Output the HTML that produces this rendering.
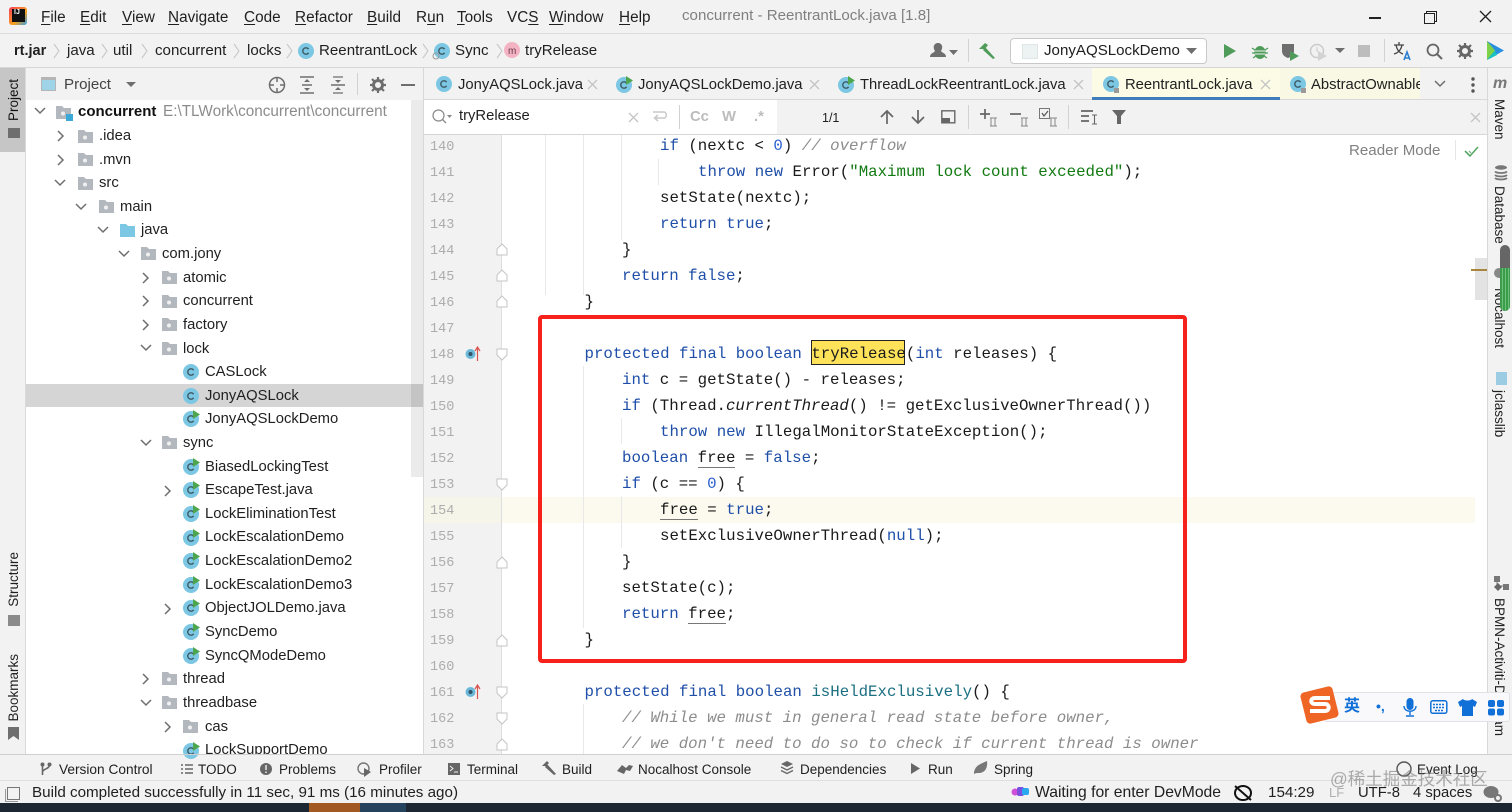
<!DOCTYPE html>
<html><head><meta charset="utf-8"><style>
html,body{margin:0;padding:0}
body{width:1512px;height:812px;position:relative;overflow:hidden;background:#f2f2f2;font-family:"Liberation Sans","Noto Sans CJK SC",sans-serif;font-size:14.8px;color:#1f1f1f}
.b{position:absolute}
.t{position:absolute;white-space:pre;line-height:20px;height:20px;transform:translateY(-10px)}
.mn{font-size:15.3px}
.f15{font-size:15.1px}
.c{position:absolute;white-space:pre;font-family:"Liberation Mono",monospace;font-size:15.75px;line-height:20px;transform:translateY(-10px);color:#1a1a1a}
.n{position:absolute;left:430px;font-family:"Liberation Mono",monospace;font-size:13.5px;line-height:20px;transform:translateY(-8px);color:#adadad}
.k{color:#1f4fa8}.m{color:#1a6f80}.g{color:#8c8c8c;font-style:italic}.s{color:#127a12}.i{font-style:italic}.u{border-bottom:1px solid #777}.d{color:#2a5fd0}
.v{position:absolute;white-space:pre;writing-mode:vertical-rl;font-size:13.5px;line-height:16px}
.l{transform:rotate(180deg)}
svg{position:absolute;overflow:visible}
u{text-decoration-thickness:1px;text-underline-offset:2px}
</style></head><body>
<svg width="0" height="0" style="position:absolute"><defs>
<g id="ci"><circle cx="8" cy="8" r="8" fill="#7cc7e3"/><path d="M10.6 6.2A3.2 3.2 0 1 0 10.6 9.8" fill="none" stroke="#3d5a66" stroke-width="1.4"/></g>
<g id="cr"><circle cx="8" cy="8" r="8" fill="#7cc7e3"/><path d="M10.6 6.2A3.2 3.2 0 1 0 10.6 9.8" fill="none" stroke="#3d5a66" stroke-width="1.4"/><path d="M10-1L17 3.5 10 8z" fill="#4da64d"/></g>
<g id="fo"><path d="M0 1h6l2 2h7v11H0z" fill="#b3b8bf"/><circle cx="7" cy="8.5" r="2" fill="#f0f0f0"/></g>
<path id="dn" d="M0 0L5 5 10 0" fill="none" stroke="#6e6e6e" stroke-width="1.5"/>
<path id="rt" d="M0 0L5 5 0 10" fill="none" stroke="#6e6e6e" stroke-width="1.5"/>
<path id="x" d="M0 0L9 9M9 0L0 9" stroke="#c4c4c4" stroke-width="1.3" fill="none"/>
<path id="fd" d="M0 0H10V6L5 11 0 6Z" fill="#fff" stroke="#c4c4c4"/>
<path id="fu" d="M0 11H10V5L5 0 0 5Z" fill="#fff" stroke="#c4c4c4"/>
</defs></svg>

<!-- title bar -->
<div class="b" style="left:9px;top:7px;width:18px;height:18px;background:linear-gradient(135deg,#fc3a5c,#f7a21c 60%,#2d9ee8);border-radius:3px"></div>
<div class="b" style="left:12px;top:9px;width:13px;height:13px;background:#111"></div>
<div class="t" style="left:14px;top:13px;color:#fff;font-size:7px;font-weight:bold">IJ</div>
<div class="t mn" style="left:41px;top:18px"><u>F</u>ile</div>
<div class="t mn" style="left:80px;top:18px"><u>E</u>dit</div>
<div class="t mn" style="left:122px;top:18px"><u>V</u>iew</div>
<div class="t mn" style="left:168px;top:18px"><u>N</u>avigate</div>
<div class="t mn" style="left:244px;top:18px"><u>C</u>ode</div>
<div class="t mn" style="left:295px;top:18px"><u>R</u>efactor</div>
<div class="t mn" style="left:367px;top:18px"><u>B</u>uild</div>
<div class="t mn" style="left:416px;top:18px">R<u>u</u>n</div>
<div class="t mn" style="left:457px;top:18px"><u>T</u>ools</div>
<div class="t mn" style="left:507px;top:18px">VC<u>S</u></div>
<div class="t mn" style="left:549px;top:18px"><u>W</u>indow</div>
<div class="t mn" style="left:619px;top:18px"><u>H</u>elp</div>
<div class="t f15" style="left:682px;top:16px;color:#808080">concurrent - ReentrantLock.java [1.8]</div>
<div class="b" style="left:1369px;top:17px;width:12px;height:1.5px;background:#222"></div>
<div class="b" style="left:1424px;top:13px;width:9px;height:9px;border:1.3px solid #222;background:#f2f2f2;box-shadow:2px -2px 0 -1px #f2f2f2,2px -2px 0 0 #222"></div>
<svg style="left:1480px;top:11px" width="12" height="12"><path d="M0 0L11 11M11 0L0 11" stroke="#222" stroke-width="1.3"/></svg>
<div class="b" style="left:0;top:33px;width:1512px;height:1px;background:#dcdcdc"></div>

<!-- breadcrumb -->
<div class="t" style="left:14px;top:51px;font-weight:bold;font-size:14.5px">rt.jar</div>
<div class="t f15" style="left:67px;top:51px">java</div>
<div class="t f15" style="left:113px;top:51px">util</div>
<div class="t f15" style="left:155px;top:51px">concurrent</div>
<div class="t f15" style="left:247px;top:51px">locks</div>
<svg style="left:298px;top:43px" width="16" height="16"><use href="#ci"/></svg>
<div class="t f15" style="left:319px;top:51px">ReentrantLock</div>
<svg style="left:434px;top:43px" width="16" height="16"><use href="#ci"/><circle cx="2" cy="13" r="3" fill="none" stroke="#999"/></svg>
<div class="t f15" style="left:455px;top:51px">Sync</div>
<svg style="left:504px;top:42px" width="16" height="16"><circle cx="8" cy="8" r="8" fill="#f4b3c2"/><text x="4" y="12" font-size="10" fill="#6b3a46" font-family="Liberation Sans">m</text></svg>
<div class="t f15" style="left:525px;top:51px">tryRelease</div>
<svg style="left:50px;top:43px" width="500" height="16"><g fill="none" stroke="#c8c8c8" stroke-width="1.1"><path d="M4 1l5 7-5 7M52 1l5 7-5 7M92 1l5 7-5 7M184 1l5 7-5 7M237 1l5 7-5 7M373 1l5 7-5 7M447 1l5 7-5 7"/></g></svg>
<svg style="left:928px;top:42px" width="32" height="18"><path d="M2 15c0-4 4-4 5-6-3-5 0-8 3-8s6 3 3 8c1 2 5 2 5 6z" fill="#6e6e6e"/><path d="M21 8h9l-4.500 5z" fill="#6e6e6e"/></svg>
<div class="b" style="left:968px;top:39px;width:1px;height:23px;background:#d2d2d2"></div>
<svg style="left:978px;top:42px" width="20" height="18"><path d="M1 7L7 1l3 2-3 4zM7 5l10 11-2 1L5 8z" fill="#4f9c5a"/></svg>
<div class="b" style="left:1010px;top:38px;width:195px;height:24px;background:#fff;border:1px solid #c9c9c9;border-radius:4px"></div>
<div class="b" style="left:1022px;top:44px;width:14px;height:13px;background:#edf3f3;border:1px solid #dfe6e6"></div>
<div class="t f15" style="left:1044px;top:51px">JonyAQSLockDemo</div>
<svg style="left:1186px;top:48px" width="12" height="8"><path d="M0 0H11L5.500 6z" fill="#6e6e6e"/></svg>
<svg style="left:1224px;top:44px" width="13" height="15"><path d="M0 0L12 7 0 14z" fill="#4f9c5a"/></svg>
<svg style="left:1252px;top:43px" width="16" height="17"><ellipse cx="8" cy="9.500" rx="5.500" ry="6.500" fill="#4f9c5a"/><path d="M0 5l3 2M16 5l-3 2M0 10h3M16 10h-3M1 15l3-2M15 15l-3-2" stroke="#4f9c5a" stroke-width="1.300"/><path d="M3 8h10M3 11h10" stroke="#f2f2f2"/></svg>
<svg style="left:1281px;top:43px" width="20" height="18"><path d="M1 1h12v7c0 4-3 6-6 7-3-1-6-3-6-7z" fill="#6e6e6e"/><path d="M9 8l9 5-9 5z" fill="#4f9c5a"/></svg>
<svg style="left:1309px;top:43px" width="20" height="18" opacity=".55"><circle cx="8" cy="8" r="6.500" fill="none" stroke="#aaa" stroke-width="1.500"/><path d="M8 4v4l3 2" stroke="#aaa" fill="none"/><path d="M9 8l9 5-9 5z" fill="#bbb"/></svg>
<svg style="left:1335px;top:48px" width="12" height="8"><path d="M0 0H10L5 5z" fill="#6e6e6e"/></svg>
<div class="b" style="left:1358px;top:45px;width:12px;height:12px;background:#bdbdbd"></div>
<div class="b" style="left:1384px;top:39px;width:1px;height:23px;background:#d2d2d2"></div>
<svg style="left:1393px;top:42px" width="20" height="19"><path d="M1 3h10M6 0v3M3 3c1 5 4 8 7 9M9 3c-1 5-4 8-8 9" stroke="#444" fill="none" stroke-width="1.300"/><path d="M11 18l3-8 3 8M12 16h4" stroke="#2a7fd0" fill="none" stroke-width="1.600"/></svg>
<svg style="left:1426px;top:43px" width="17" height="17"><circle cx="7" cy="7" r="5.500" fill="none" stroke="#666" stroke-width="1.800"/><path d="M11 11l5 5" stroke="#666" stroke-width="2"/></svg>
<svg style="left:1457px;top:43px" width="16" height="16"><circle cx="8" cy="8" r="4.500" fill="none" stroke="#666" stroke-width="3"/><path d="M8 0v3M8 13v3M0 8h3M13 8h3M2 2l2 2M12 12l2 2M14 2l-2 2M2 14l2-2" stroke="#666" stroke-width="2.200"/></svg>
<svg style="left:1487px;top:41px" width="18" height="19"><path d="M0 0L17 9.500 0 19z" fill="#2b8fe0"/><path d="M0 0L8 9.500 0 19z" fill="#7fd14a"/><path d="M8 9.500L0 19l10-5z" fill="#19c2c2"/></svg>
<div class="b" style="left:0;top:67px;width:1512px;height:1px;background:#d6d6d6"></div>

<!-- left strip -->
<div class="b" style="left:0;top:68px;width:25px;height:84px;background:#c6c6c6"></div>
<div class="b" style="left:25px;top:68px;width:1px;height:687px;background:#dadada"></div>
<div class="v l" style="left:6px;top:79px;color:#111">Project</div>
<div class="b" style="left:8px;top:128px;width:12px;height:10px;background:#6e6e6e"></div>
<div class="v l" style="left:6px;top:552px">Structure</div>
<div class="b" style="left:8px;top:615px;width:12px;height:11px;background:#8a8a8a"></div>
<div class="v l" style="left:6px;top:654px">Bookmarks</div>
<svg style="left:8px;top:727px" width="12" height="14"><path d="M0 0H11V13L5.500 9 0 13z" fill="#6e6e6e"/></svg>

<!-- project panel header -->
<div class="b" style="left:41px;top:77px;width:15px;height:14px;background:#9fd4e8;border:1px solid #b5b5b5;border-top:3px solid #b5b5b5;box-sizing:border-box"></div>
<div class="t f15" style="left:64px;top:85px;color:#444">Project</div>
<svg style="left:126px;top:82px" width="12" height="8"><path d="M0 0H10L5 5z" fill="#6e6e6e"/></svg>
<svg style="left:268px;top:76px" width="18" height="18"><circle cx="9" cy="9" r="7.500" fill="none" stroke="#6e6e6e" stroke-width="1.500"/><path d="M9 1v5M9 12v5M1 9h5M12 9h5" stroke="#6e6e6e" stroke-width="1.500"/></svg>
<svg style="left:300px;top:76px" width="15" height="18"><path d="M0 1h14M0 17h14M2 9h10" stroke="#6e6e6e" stroke-width="1.500"/><path d="M7 3l3 3H4zM7 15l3-3H4z" fill="#6e6e6e"/></svg>
<svg style="left:331px;top:76px" width="15" height="18"><path d="M0 9h14" stroke="#6e6e6e" stroke-width="1.500"/><path d="M7 7l3-3H4zM7 11l3 3H4z" fill="#6e6e6e"/><path d="M2 1h10M2 17h10" stroke="#6e6e6e" stroke-width="1.200"/></svg>
<div class="b" style="left:357px;top:73px;width:1px;height:22px;background:#d2d2d2"></div>
<svg style="left:370px;top:77px" width="16" height="16"><circle cx="8" cy="8" r="4.500" fill="none" stroke="#6e6e6e" stroke-width="3"/><path d="M8 0v3M8 13v3M0 8h3M13 8h3M2 2l2 2M12 12l2 2M14 2l-2 2M2 14l2-2" stroke="#6e6e6e" stroke-width="2.200"/></svg>
<div class="b" style="left:401px;top:84px;width:14px;height:2px;background:#6e6e6e"></div>

<!-- tree -->
<div class="b" style="left:26px;top:100px;width:397px;height:655px;background:#fff"></div>
<div class="b" style="left:411px;top:100px;width:12px;height:377px;background:#ebebeb"></div>
<div class="b" style="left:26px;top:384px;width:397px;height:23px;background:#d5d5d5"></div>
<div class="b" style="left:411px;top:384px;width:12px;height:23px;background:#c4c4c4"></div>

<svg style="left:35px;top:108px" width="10" height="6"><use href="#dn"/></svg>
<svg style="left:56px;top:105px" width="16" height="15"><use href="#fo"/><rect x="10" y="9" width="7" height="7" fill="#3ba9d8"/></svg>
<div class="t" style="left:78px;top:112px;font-weight:bold;font-size:15px;color:#111">concurrent</div>
<div class="t" style="left:163px;top:112px;color:#8c8c8c;font-size:15.3px">E:\TLWork\concurrent\concurrent</div>

<svg style="left:58px;top:131px" width="6" height="10"><use href="#rt"/></svg><svg style="left:78px;top:129px" width="15" height="15"><use href="#fo"/></svg><div class="t" style="left:99px;top:136px">.idea</div>
<svg style="left:58px;top:155px" width="6" height="10"><use href="#rt"/></svg><svg style="left:78px;top:152px" width="15" height="15"><use href="#fo"/></svg><div class="t" style="left:99px;top:160px">.mvn</div>
<svg style="left:55px;top:180px" width="10" height="6"><use href="#dn"/></svg><svg style="left:78px;top:176px" width="15" height="15"><use href="#fo"/></svg><div class="t" style="left:99px;top:183px">src</div>
<svg style="left:76px;top:204px" width="10" height="6"><use href="#dn"/></svg><svg style="left:99px;top:199px" width="15" height="15"><use href="#fo"/></svg><div class="t" style="left:120px;top:207px">main</div>
<svg style="left:98px;top:227px" width="10" height="6"><use href="#dn"/></svg><svg style="left:120px;top:223px" width="15" height="15"><path d="M0 1h6l2 2h7v11H0z" fill="#7cc7e3"/></svg><div class="t" style="left:141px;top:230px">java</div>
<svg style="left:119px;top:251px" width="10" height="6"><use href="#dn"/></svg><svg style="left:141px;top:246px" width="15" height="15"><use href="#fo"/></svg><div class="t" style="left:162px;top:254px">com.jony</div>
<svg style="left:143px;top:273px" width="6" height="10"><use href="#rt"/></svg><svg style="left:162px;top:270px" width="15" height="15"><use href="#fo"/></svg><div class="t" style="left:183px;top:278px">atomic</div>
<svg style="left:143px;top:296px" width="6" height="10"><use href="#rt"/></svg><svg style="left:162px;top:294px" width="15" height="15"><use href="#fo"/></svg><div class="t" style="left:183px;top:301px">concurrent</div>
<svg style="left:143px;top:320px" width="6" height="10"><use href="#rt"/></svg><svg style="left:162px;top:317px" width="15" height="15"><use href="#fo"/></svg><div class="t" style="left:183px;top:325px">factory</div>
<svg style="left:141px;top:345px" width="10" height="6"><use href="#dn"/></svg><svg style="left:162px;top:341px" width="15" height="15"><use href="#fo"/></svg><div class="t" style="left:183px;top:349px">lock</div>
<svg style="left:183px;top:364px" width="16" height="16"><use href="#ci"/></svg><div class="t" style="left:205px;top:372px">CASLock</div>
<svg style="left:183px;top:388px" width="16" height="16"><use href="#ci"/></svg><div class="t" style="left:205px;top:396px">JonyAQSLock</div>
<svg style="left:183px;top:411px" width="16" height="16"><use href="#cr"/></svg><div class="t" style="left:205px;top:419px">JonyAQSLockDemo</div>
<svg style="left:141px;top:440px" width="10" height="6"><use href="#dn"/></svg><svg style="left:162px;top:435px" width="15" height="15"><use href="#fo"/></svg><div class="t" style="left:183px;top:443px">sync</div>
<svg style="left:183px;top:459px" width="16" height="16"><use href="#cr"/></svg><div class="t" style="left:205px;top:467px">BiasedLockingTest</div>
<svg style="left:165px;top:486px" width="6" height="10"><use href="#rt"/></svg><svg style="left:183px;top:482px" width="16" height="16"><use href="#cr"/></svg><div class="t" style="left:205px;top:490px">EscapeTest.java</div>
<svg style="left:183px;top:506px" width="16" height="16"><use href="#cr"/></svg><div class="t" style="left:205px;top:514px">LockEliminationTest</div>
<svg style="left:183px;top:530px" width="16" height="16"><use href="#cr"/></svg><div class="t" style="left:205px;top:537px">LockEscalationDemo</div>
<svg style="left:183px;top:553px" width="16" height="16"><use href="#cr"/></svg><div class="t" style="left:205px;top:561px">LockEscalationDemo2</div>
<svg style="left:183px;top:577px" width="16" height="16"><use href="#cr"/></svg><div class="t" style="left:205px;top:585px">LockEscalationDemo3</div>
<svg style="left:165px;top:604px" width="6" height="10"><use href="#rt"/></svg><svg style="left:183px;top:600px" width="16" height="16"><use href="#cr"/></svg><div class="t" style="left:205px;top:608px">ObjectJOLDemo.java</div>
<svg style="left:183px;top:624px" width="16" height="16"><use href="#cr"/></svg><div class="t" style="left:205px;top:632px">SyncDemo</div>
<svg style="left:183px;top:648px" width="16" height="16"><use href="#cr"/></svg><div class="t" style="left:205px;top:656px">SyncQModeDemo</div>
<svg style="left:143px;top:674px" width="6" height="10"><use href="#rt"/></svg><svg style="left:162px;top:671px" width="15" height="15"><use href="#fo"/></svg><div class="t" style="left:183px;top:679px">thread</div>
<svg style="left:141px;top:700px" width="10" height="6"><use href="#dn"/></svg><svg style="left:162px;top:695px" width="15" height="15"><use href="#fo"/></svg><div class="t" style="left:183px;top:703px">threadbase</div>
<svg style="left:165px;top:722px" width="6" height="10"><use href="#rt"/></svg><svg style="left:183px;top:719px" width="15" height="15"><use href="#fo"/></svg><div class="t" style="left:205px;top:727px">cas</div>
<svg style="left:183px;top:743px" width="16" height="16"><use href="#cr"/></svg><div class="t" style="left:205px;top:750px;clip-path:inset(0 0 5px 0)">LockSupportDemo</div>
<div class="b" style="left:423px;top:68px;width:1px;height:687px;background:#d8d8d8"></div>

<!-- tabs -->
<div class="b" style="left:1092px;top:68px;width:188px;height:29px;background:#fbfbe6"></div>
<div class="b" style="left:1092px;top:97px;width:188px;height:3px;background:#3f7ebb"></div>
<div class="b" style="left:1280px;top:68px;width:140px;height:32px;background:#f8f8e4"></div>
<div class="b" style="left:424px;top:99px;width:668px;height:1px;background:#d8d8d8"></div>
<div class="b" style="left:1280px;top:99px;width:208px;height:1px;background:#d8d8d8"></div>
<svg style="left:436px;top:76px" width="16" height="16"><use href="#ci"/></svg><div class="t" style="left:458px;top:85px">JonyAQSLock.java</div>
<svg style="left:588px;top:80px" width="9" height="9"><use href="#x"/></svg>
<svg style="left:616px;top:77px" width="16" height="16"><use href="#cr"/></svg><div class="t" style="left:638px;top:85px">JonyAQSLockDemo.java</div>
<svg style="left:810px;top:80px" width="9" height="9"><use href="#x"/></svg>
<svg style="left:838px;top:77px" width="16" height="16"><use href="#cr"/></svg><div class="t" style="left:860px;top:85px">ThreadLockReentrantLock.java</div>
<svg style="left:1074px;top:80px" width="9" height="9"><use href="#x"/></svg>
<svg style="left:1103px;top:76px" width="16" height="16"><use href="#ci"/><rect x="11" y="12" width="5" height="5" fill="#9a9a9a"/></svg><div class="t" style="left:1125px;top:85px">ReentrantLock.java</div>
<svg style="left:1261px;top:80px" width="9" height="9"><use href="#x"/></svg>
<svg style="left:1290px;top:76px" width="16" height="16"><use href="#ci"/><rect x="11" y="12" width="5" height="5" fill="#9a9a9a"/></svg><div class="t" style="left:1311px;top:85px;width:109px;overflow:hidden">AbstractOwnableSynchronizer</div>
<svg style="left:1435px;top:81px" width="11" height="7"><use href="#dn"/></svg>
<svg style="left:1471px;top:77px" width="4" height="16"><circle cx="2" cy="2" r="1.700" fill="#555"/><circle cx="2" cy="8" r="1.700" fill="#555"/><circle cx="2" cy="14" r="1.700" fill="#555"/></svg>

<!-- search bar -->
<div class="b" style="left:424px;top:100px;width:353px;height:34px;background:#fff"></div>
<div class="b" style="left:424px;top:134px;width:1064px;height:1px;background:#d6d6d6"></div>
<svg style="left:432px;top:109px" width="20" height="16"><circle cx="6.500" cy="6.500" r="5.500" fill="none" stroke="#8a8a8a" stroke-width="1.200"/><path d="M10.500 10.500l3.500 3.500" stroke="#8a8a8a" stroke-width="1.300"/><path d="M15 6h5l-2.500 3z" fill="#8a8a8a"/></svg>
<div class="t" style="left:459px;top:116px">tryRelease</div>
<svg style="left:629px;top:113px" width="9" height="9"><use href="#x"/></svg>
<svg style="left:652px;top:110px" width="15" height="13"><path d="M1 2h11c3 0 3 6 0 6H4M6 5L2.500 8 6 11" fill="none" stroke="#c9c9c9" stroke-width="1.500"/></svg>
<div class="b" style="left:679px;top:105px;width:1px;height:24px;background:#d2d2d2"></div>
<div class="t" style="left:690px;top:117px;font-weight:bold;color:#bcbcbc">Cc</div>
<div class="t" style="left:722px;top:117px;font-weight:bold;color:#bcbcbc">W</div>
<div class="t" style="left:754px;top:117px;font-weight:bold;color:#bcbcbc">.*</div>
<div class="t" style="left:822px;top:118px;font-size:12.5px">1/1</div>
<svg style="left:880px;top:110px" width="14" height="14"><path d="M7 14V1M1 7l6-6 6 6" fill="none" stroke="#666" stroke-width="1.700"/></svg>
<svg style="left:911px;top:110px" width="14" height="14"><path d="M7 0v13M1 7l6 6 6-6" fill="none" stroke="#666" stroke-width="1.700"/></svg>
<svg style="left:941px;top:110px" width="15" height="14"><rect x=".8" y=".8" width="13" height="12" fill="none" stroke="#666" stroke-width="1.400"/><rect x="1" y="8" width="8" height="5" fill="#666"/></svg>
<div class="b" style="left:968px;top:105px;width:1px;height:24px;background:#d2d2d2"></div>
<svg style="left:979px;top:108px" width="20" height="19"><path d="M6 1v10M1 6h10" stroke="#666" stroke-width="1.700"/><path d="M11 10h7M12 10v8M16 10v8M11 18h7" stroke="#888"/></svg>
<svg style="left:1010px;top:113px" width="20" height="14"><path d="M0 1h11" stroke="#666" stroke-width="1.700"/><path d="M11 5h7M12 5v8M16 5v8M11 13h7" stroke="#888"/></svg>
<svg style="left:1039px;top:108px" width="20" height="19"><rect x=".5" y=".5" width="10" height="10" fill="none" stroke="#777"/><path d="M3 5l2 3 4-5" fill="none" stroke="#555" stroke-width="1.200"/><path d="M11 10h7M12 10v8M16 10v8M11 18h7" stroke="#888"/></svg>
<div class="b" style="left:1068px;top:105px;width:1px;height:24px;background:#d2d2d2"></div>
<svg style="left:1081px;top:110px" width="17" height="16"><path d="M0 1h12M0 6h8M0 11h8" stroke="#666" stroke-width="1.700"/><path d="M11 5h5M13.500 5v9M11 14h5" stroke="#666" stroke-width="1.100"/></svg>
<svg style="left:1112px;top:110px" width="15" height="15"><path d="M0 0H14L9 6V14H5V6z" fill="#666"/></svg>
<svg style="left:1471px;top:113px" width="9" height="9"><use href="#x"/></svg>

<!-- editor -->
<div class="b" style="left:424px;top:135px;width:1064px;height:620px;background:#fff"></div>
<div class="b" style="left:424px;top:135px;width:77px;height:620px;background:#f2f2f2"></div>
<div class="b" style="left:501px;top:135px;width:1px;height:620px;background:#dedede"></div>
<div class="b" style="left:424px;top:497px;width:77px;height:26px;background:#f5f5ea"></div>
<div class="b" style="left:502px;top:497px;width:973px;height:26px;background:#fcfaee"></div>
<!-- indent guides -->
<div class="b" style="left:545px;top:135px;width:1px;height:160px;background:#e8e8e8"></div>
<div class="b" style="left:583px;top:135px;width:1px;height:160px;background:#e8e8e8"></div>
<div class="b" style="left:621px;top:135px;width:1px;height:105px;background:#e8e8e8"></div>
<div class="b" style="left:658px;top:159px;width:1px;height:26px;background:#e8e8e8"></div>
<div class="b" style="left:583px;top:366px;width:1px;height:262px;background:#e8e8e8"></div>
<div class="b" style="left:621px;top:418px;width:1px;height:26px;background:#e8e8e8"></div>
<div class="b" style="left:621px;top:496px;width:1px;height:52px;background:#e8e8e8"></div>
<div class="b" style="left:583px;top:704px;width:1px;height:51px;background:#e8e8e8"></div>

<div class="n" style="top:146px">140</div><div class="n" style="top:172px">141</div><div class="n" style="top:198px">142</div><div class="n" style="top:224px">143</div><div class="n" style="top:250px">144</div><div class="n" style="top:276px">145</div><div class="n" style="top:302px">146</div><div class="n" style="top:328px">147</div><div class="n" style="top:354px">148</div><div class="n" style="top:380px">149</div><div class="n" style="top:406px">150</div><div class="n" style="top:432px">151</div><div class="n" style="top:458px">152</div><div class="n" style="top:484px">153</div><div class="n" style="top:510px">154</div><div class="n" style="top:536px">155</div><div class="n" style="top:562px">156</div><div class="n" style="top:588px">157</div><div class="n" style="top:614px">158</div><div class="n" style="top:640px">159</div><div class="n" style="top:666px">160</div><div class="n" style="top:692px">161</div><div class="n" style="top:718px">162</div><div class="n" style="top:744px">163</div>

<svg style="left:497px;top:244px" width="11" height="12"><use href="#fu"/></svg>
<svg style="left:497px;top:270px" width="11" height="12"><use href="#fu"/></svg>
<svg style="left:497px;top:296px" width="11" height="12"><use href="#fu"/></svg>
<svg style="left:497px;top:349px" width="11" height="12"><use href="#fd"/></svg>
<svg style="left:497px;top:479px" width="11" height="12"><use href="#fd"/></svg>
<svg style="left:497px;top:557px" width="11" height="12"><use href="#fu"/></svg>
<svg style="left:497px;top:635px" width="11" height="12"><use href="#fu"/></svg>
<svg style="left:497px;top:687px" width="11" height="12"><use href="#fd"/></svg>
<svg style="left:497px;top:713px" width="11" height="12"><use href="#fd"/></svg>
<svg style="left:497px;top:739px" width="11" height="12"><use href="#fu"/></svg>
<svg style="left:465px;top:346px" width="18" height="16"><circle cx="5.500" cy="8" r="5" fill="#6cb8d8"/><circle cx="5.500" cy="8" r="2" fill="#33556a"/><path d="M12.500 15V2M10 5l2.500-4 2.500 4" fill="none" stroke="#d9534f" stroke-width="1.200"/></svg>
<svg style="left:465px;top:684px" width="18" height="16"><circle cx="5.500" cy="8" r="5" fill="#6cb8d8"/><circle cx="5.500" cy="8" r="2" fill="#33556a"/><path d="M12.500 15V2M10 5l2.500-4 2.500 4" fill="none" stroke="#d9534f" stroke-width="1.200"/></svg>

<div class="c" style="left:660px;top:146px"><span class="k">if</span> (nextc &lt; <span class="d">0</span>) <span class="g">// overflow</span></div>
<div class="c" style="left:698px;top:172px"><span class="k">throw new</span> Error(<span class="s">"Maximum lock count exceeded"</span>);</div>
<div class="c" style="left:660px;top:198px">setState(nextc);</div>
<div class="c" style="left:660px;top:224px"><span class="k">return true</span>;</div>
<div class="c" style="left:622px;top:250px">}</div>
<div class="c" style="left:622px;top:276px"><span class="k">return false</span>;</div>
<div class="c" style="left:584.500px;top:302px">}</div>
<div class="b" style="left:811px;top:340px;width:94px;height:25px;background:#fde25a;border:1px solid #222;box-sizing:border-box"></div>
<div class="c" style="left:584.500px;top:354px"><span class="k">protected final boolean</span> tryRelease(<span class="k">int</span> releases) {</div>
<div class="c" style="left:622px;top:380px"><span class="k">int</span> c = getState() - releases;</div>
<div class="c" style="left:622px;top:406px"><span class="k">if</span> (Thread.<span class="i">currentThread</span>() != getExclusiveOwnerThread())</div>
<div class="c" style="left:660px;top:432px"><span class="k">throw new</span> IllegalMonitorStateException();</div>
<div class="c" style="left:622px;top:458px"><span class="k">boolean</span> <span class="u">free</span> = <span class="k">false</span>;</div>
<div class="c" style="left:622px;top:484px"><span class="k">if</span> (c == <span class="d">0</span>) {</div>
<div class="c" style="left:660px;top:510px"><span class="u">free</span> = <span class="k">true</span>;</div>
<div class="c" style="left:660px;top:536px">setExclusiveOwnerThread(<span class="k">null</span>);</div>
<div class="c" style="left:622px;top:562px">}</div>
<div class="c" style="left:622px;top:588px">setState(c);</div>
<div class="c" style="left:622px;top:614px"><span class="k">return</span> <span class="u">free</span>;</div>
<div class="c" style="left:584.500px;top:640px">}</div>
<div class="c" style="left:584.500px;top:692px"><span class="k">protected final boolean</span> <span class="m">isHeldExclusively</span>() {</div>
<div class="c" style="left:622px;top:718px"><span class="g">// While we must in general read state before owner,</span></div>
<div class="c" style="left:622px;top:744px"><span class="g">// we don't need to do so to check if current thread is owner</span></div>

<div class="b" style="left:538px;top:315px;width:649px;height:348px;border:4px solid #f5211a;border-radius:4px;box-sizing:border-box"></div>

<div class="t f15" style="left:1349px;top:151px;color:#808080">Reader Mode</div>
<div class="b" style="left:1455px;top:140px;width:1px;height:20px;background:#e6e6e6"></div>
<svg style="left:1464px;top:145px" width="16" height="13"><path d="M1 6l5 5 8-9" fill="none" stroke="#59a869" stroke-width="1.600"/><path d="M5 6l2 2" stroke="#59a869"/></svg>
<div class="b" style="left:1475px;top:258px;width:12px;height:42px;background:#e3e3e3"></div>
<div class="b" style="left:1471px;top:269px;width:16px;height:2px;background:#a8853a"></div>

<!-- right strip -->
<div class="b" style="left:1487px;top:68px;width:1px;height:687px;background:#d8d8d8"></div>
<div class="t" style="left:1493px;top:84px;font-weight:bold;font-style:italic;color:#777;font-size:16px">m</div>
<div class="v" style="left:1491px;top:99px">Maven</div>
<svg style="left:1494px;top:165px" width="14" height="15"><ellipse cx="7" cy="2.500" rx="6" ry="2.200" fill="#777"/><path d="M1 6.500c2 2 10 2 12 0M1 10c2 2 10 2 12 0M1 13c2 2 10 2 12 0" stroke="#777" stroke-width="1.800" fill="none"/></svg>
<div class="v" style="left:1491px;top:186px">Database</div>
<div class="b" style="left:1494px;top:268px;width:10px;height:10px;background:#888;border-radius:50% 50% 0 50%"></div>
<div class="v" style="left:1491px;top:288px">Nocalhost</div>
<div class="b" style="left:1496px;top:372px;width:11px;height:13px;background:#9ccbe4"></div>
<div class="v" style="left:1491px;top:390px">jclasslib</div>
<svg style="left:1494px;top:576px" width="16" height="16"><rect x="0" y="0" width="6" height="6" fill="#777"/><path d="M3 6v4h6" stroke="#777" fill="none"/><path d="M4 7l4 4-4 4-4-4z" fill="#666"/><rect x="9" y="8" width="6" height="6" fill="#777"/></svg>
<div class="v" style="left:1491px;top:598px">BPMN-Activiti-Diagram</div>
<div class="b" style="left:1500px;top:245px;width:10px;height:66px;background:#666;border-radius:5px"></div>
<div class="b" style="left:1500px;top:268px;width:10px;height:43px;background:repeating-linear-gradient(90deg,#3d9b4c 0 2px,#6cc27a 2px 3px);border-radius:0 0 5px 5px"></div>

<!-- sogou bar -->
<div class="b" style="left:1324px;top:692px;width:186px;height:30px;background:#f9f9fb;border:1px solid #e2e2e6;border-radius:3px;box-sizing:border-box"></div>
<div class="b" style="left:1303px;top:689px;width:33px;height:32px;background:#ee6526;border-radius:4px;transform:rotate(-14deg)"></div>
<svg style="left:1304px;top:692px" width="32" height="26"><path d="M26 6H11c-5 0-5 6 0 6h10c5 0 5 7 0 7H6" fill="none" stroke="#fff" stroke-width="4"/></svg>
<div class="t" style="left:1344px;top:707px;color:#1070d8;font-weight:bold;font-size:16px">英</div>
<div class="t" style="left:1376px;top:706px;color:#1070d8;font-weight:bold;font-size:14px">•,</div>
<svg style="left:1403px;top:698px" width="14" height="19"><rect x="3.500" y="0" width="7" height="12" rx="3.500" fill="#1070d8"/><path d="M1 8c0 7 12 7 12 0M7 14v3M3 18h8" fill="none" stroke="#1070d8" stroke-width="1.400"/></svg>
<svg style="left:1430px;top:700px" width="18" height="15"><rect x=".8" y=".8" width="16" height="12.500" rx="2" fill="none" stroke="#1070d8" stroke-width="1.500"/><path d="M3 4.500h12M3 7.500h12M5 10.500h8" stroke="#1070d8" stroke-width="1.500" stroke-dasharray="2 1"/></svg>
<svg style="left:1458px;top:699px" width="19" height="17"><path d="M5 0L0 3l2 5 2-1v10h11V7l2 1 2-5-5-3c-1 2-8 2-9 0z" fill="#1070d8"/></svg>
<svg style="left:1488px;top:700px" width="16" height="15"><rect width="7" height="7" rx="2" fill="#1070d8"/><rect x="9" width="7" height="7" rx="2" fill="#1070d8"/><rect y="8.500" width="7" height="7" rx="2" fill="#1070d8"/><rect x="9" y="8.500" width="7" height="7" rx="2" fill="#1070d8"/></svg>

<!-- bottom tool bar -->
<div class="b" style="left:0;top:754px;width:1512px;height:1px;background:#cfcfcf"></div>
<div class="b" style="left:0;top:780px;width:1512px;height:1px;background:#dfdfdf"></div>
<svg style="left:40px;top:762px" width="12" height="15"><circle cx="2.500" cy="2.500" r="2" fill="#666"/><circle cx="9.500" cy="2.500" r="2" fill="#666"/><path d="M2.500 2v11M9.500 3c0 4-7 4-7 7" stroke="#666" stroke-width="1.600" fill="none"/></svg>
<div class="t" style="left:59px;top:770px;font-size:13.700px">Version Control</div>
<svg style="left:181px;top:764px" width="12" height="11"><path d="M0 1h2M4 1h8M0 5h2M4 5h8M0 9h2M4 9h8" stroke="#666" stroke-width="1.500"/></svg>
<div class="t" style="left:198px;top:770px;font-size:13.500px">TODO</div>
<svg style="left:260px;top:763px" width="12" height="12"><circle cx="6" cy="6" r="6" fill="#666"/><path d="M6 2v5M6 8.500v1.500" stroke="#f2f2f2" stroke-width="1.400"/></svg>
<div class="t" style="left:279px;top:770px;font-size:13.500px">Problems</div>
<svg style="left:357px;top:762px" width="15" height="15"><circle cx="6.500" cy="6.500" r="5.500" fill="none" stroke="#777" stroke-width="1.400"/><path d="M7 6l7 4-7 5z" fill="#666"/></svg>
<div class="t" style="left:379px;top:770px;font-size:13.500px">Profiler</div>
<div class="b" style="left:448px;top:763px;width:12px;height:12px;background:#666"></div>
<svg style="left:449px;top:764px" width="10" height="10"><path d="M1 2l3 2.500L1 7M5 8h4" fill="none" stroke="#f2f2f2"/></svg>
<div class="t" style="left:467px;top:770px;font-size:13.500px">Terminal</div>
<svg style="left:542px;top:761px" width="15" height="15"><path d="M0 5L5 0l2 2-3 3zM5 3l9 10-2 1L3 6z" fill="#666"/></svg>
<div class="t" style="left:562px;top:770px;font-size:13.500px">Build</div>
<svg style="left:617px;top:763px" width="17" height="12"><path d="M0 8l5-6 4 3 3-3 4 1-3 5-4-1-2 4z" fill="#666"/></svg>
<div class="t" style="left:638px;top:770px;font-size:13.500px">Nocalhost Console</div>
<svg style="left:780px;top:761px" width="14" height="15"><path d="M7 0l6 3-6 3-6-3z" fill="#666"/><path d="M1 6l6 3 6-3M1 9.500l6 3 6-3" fill="none" stroke="#666" stroke-width="1.300"/></svg>
<div class="t" style="left:800px;top:770px;font-size:13.500px">Dependencies</div>
<svg style="left:911px;top:763px" width="10" height="12"><path d="M0 0L9 5.500 0 11z" fill="#666"/></svg>
<div class="t" style="left:928px;top:770px;font-size:13.500px">Run</div>
<svg style="left:974px;top:761px" width="14" height="15"><path d="M0 13C0 5 6 3 13 0c1 8-3 12-8 12-2 0-3 0-5 1z" fill="#777"/></svg>
<div class="t" style="left:994px;top:770px;font-size:13.500px">Spring</div>
<svg style="left:1396px;top:761px" width="17" height="17"><circle cx="8" cy="8" r="7" fill="none" stroke="#555" stroke-width="1.400"/></svg>
<div class="t" style="left:1417px;top:770px;font-size:13.500px">Event Log</div>

<!-- status bar -->
<div class="b" style="left:7px;top:787px;width:11px;height:11px;border:1px solid #777;background:#f2f2f2;box-shadow:-1px 1px 0 0 #f2f2f2,-2px 2px 0 0 #999"></div>
<div class="t" style="left:32px;top:793px;font-size:15.200px">Build completed successfully in 11 sec, 91 ms (16 minutes ago)</div>
<svg style="left:1011px;top:785px" width="19" height="13"><circle cx="4" cy="7" r="3.500" fill="#d04fd8"/><rect x="6" y="2" width="7" height="9" rx="2" fill="#7a4fe0"/><rect x="11" y="3" width="7" height="7" rx="2" fill="#2aa8f0"/></svg>
<div class="t" style="left:1035px;top:793px;font-size:15.700px">Waiting for enter DevMode</div>
<svg style="left:1233px;top:784px" width="20" height="18"><ellipse cx="10" cy="9" rx="8" ry="7" fill="none" stroke="#111" stroke-width="2"/><path d="M2 2l16 14" stroke="#111" stroke-width="2"/></svg>
<div class="t" style="left:1268px;top:793px;font-size:15.200px">154:29</div>
<div class="t" style="left:1329px;top:793px;color:#b0b0b0;font-size:13px">LF</div>
<div class="t" style="left:1358px;top:793px">UTF-8</div>
<div class="t" style="left:1413px;top:793px">4 spaces</div>
<svg style="left:1483px;top:785px" width="20" height="17"><ellipse cx="8" cy="7" rx="7.500" ry="6" fill="#777"/><circle cx="15" cy="13" r="3" fill="none" stroke="#777" stroke-width="2"/></svg>
<div class="t" style="left:1330px;top:779px;color:rgba(120,120,120,.6);font-size:17.500px">@稀土掘金技术社区</div>

<!-- taskbar -->
<div class="b" style="left:0;top:803px;width:1512px;height:9px;background:#1c2632"></div>
<div class="b" style="left:309px;top:803px;width:51px;height:9px;background:#a35a22"></div>
<div class="b" style="left:360px;top:803px;width:46px;height:9px;background:#24425c"></div>
</body></html>
